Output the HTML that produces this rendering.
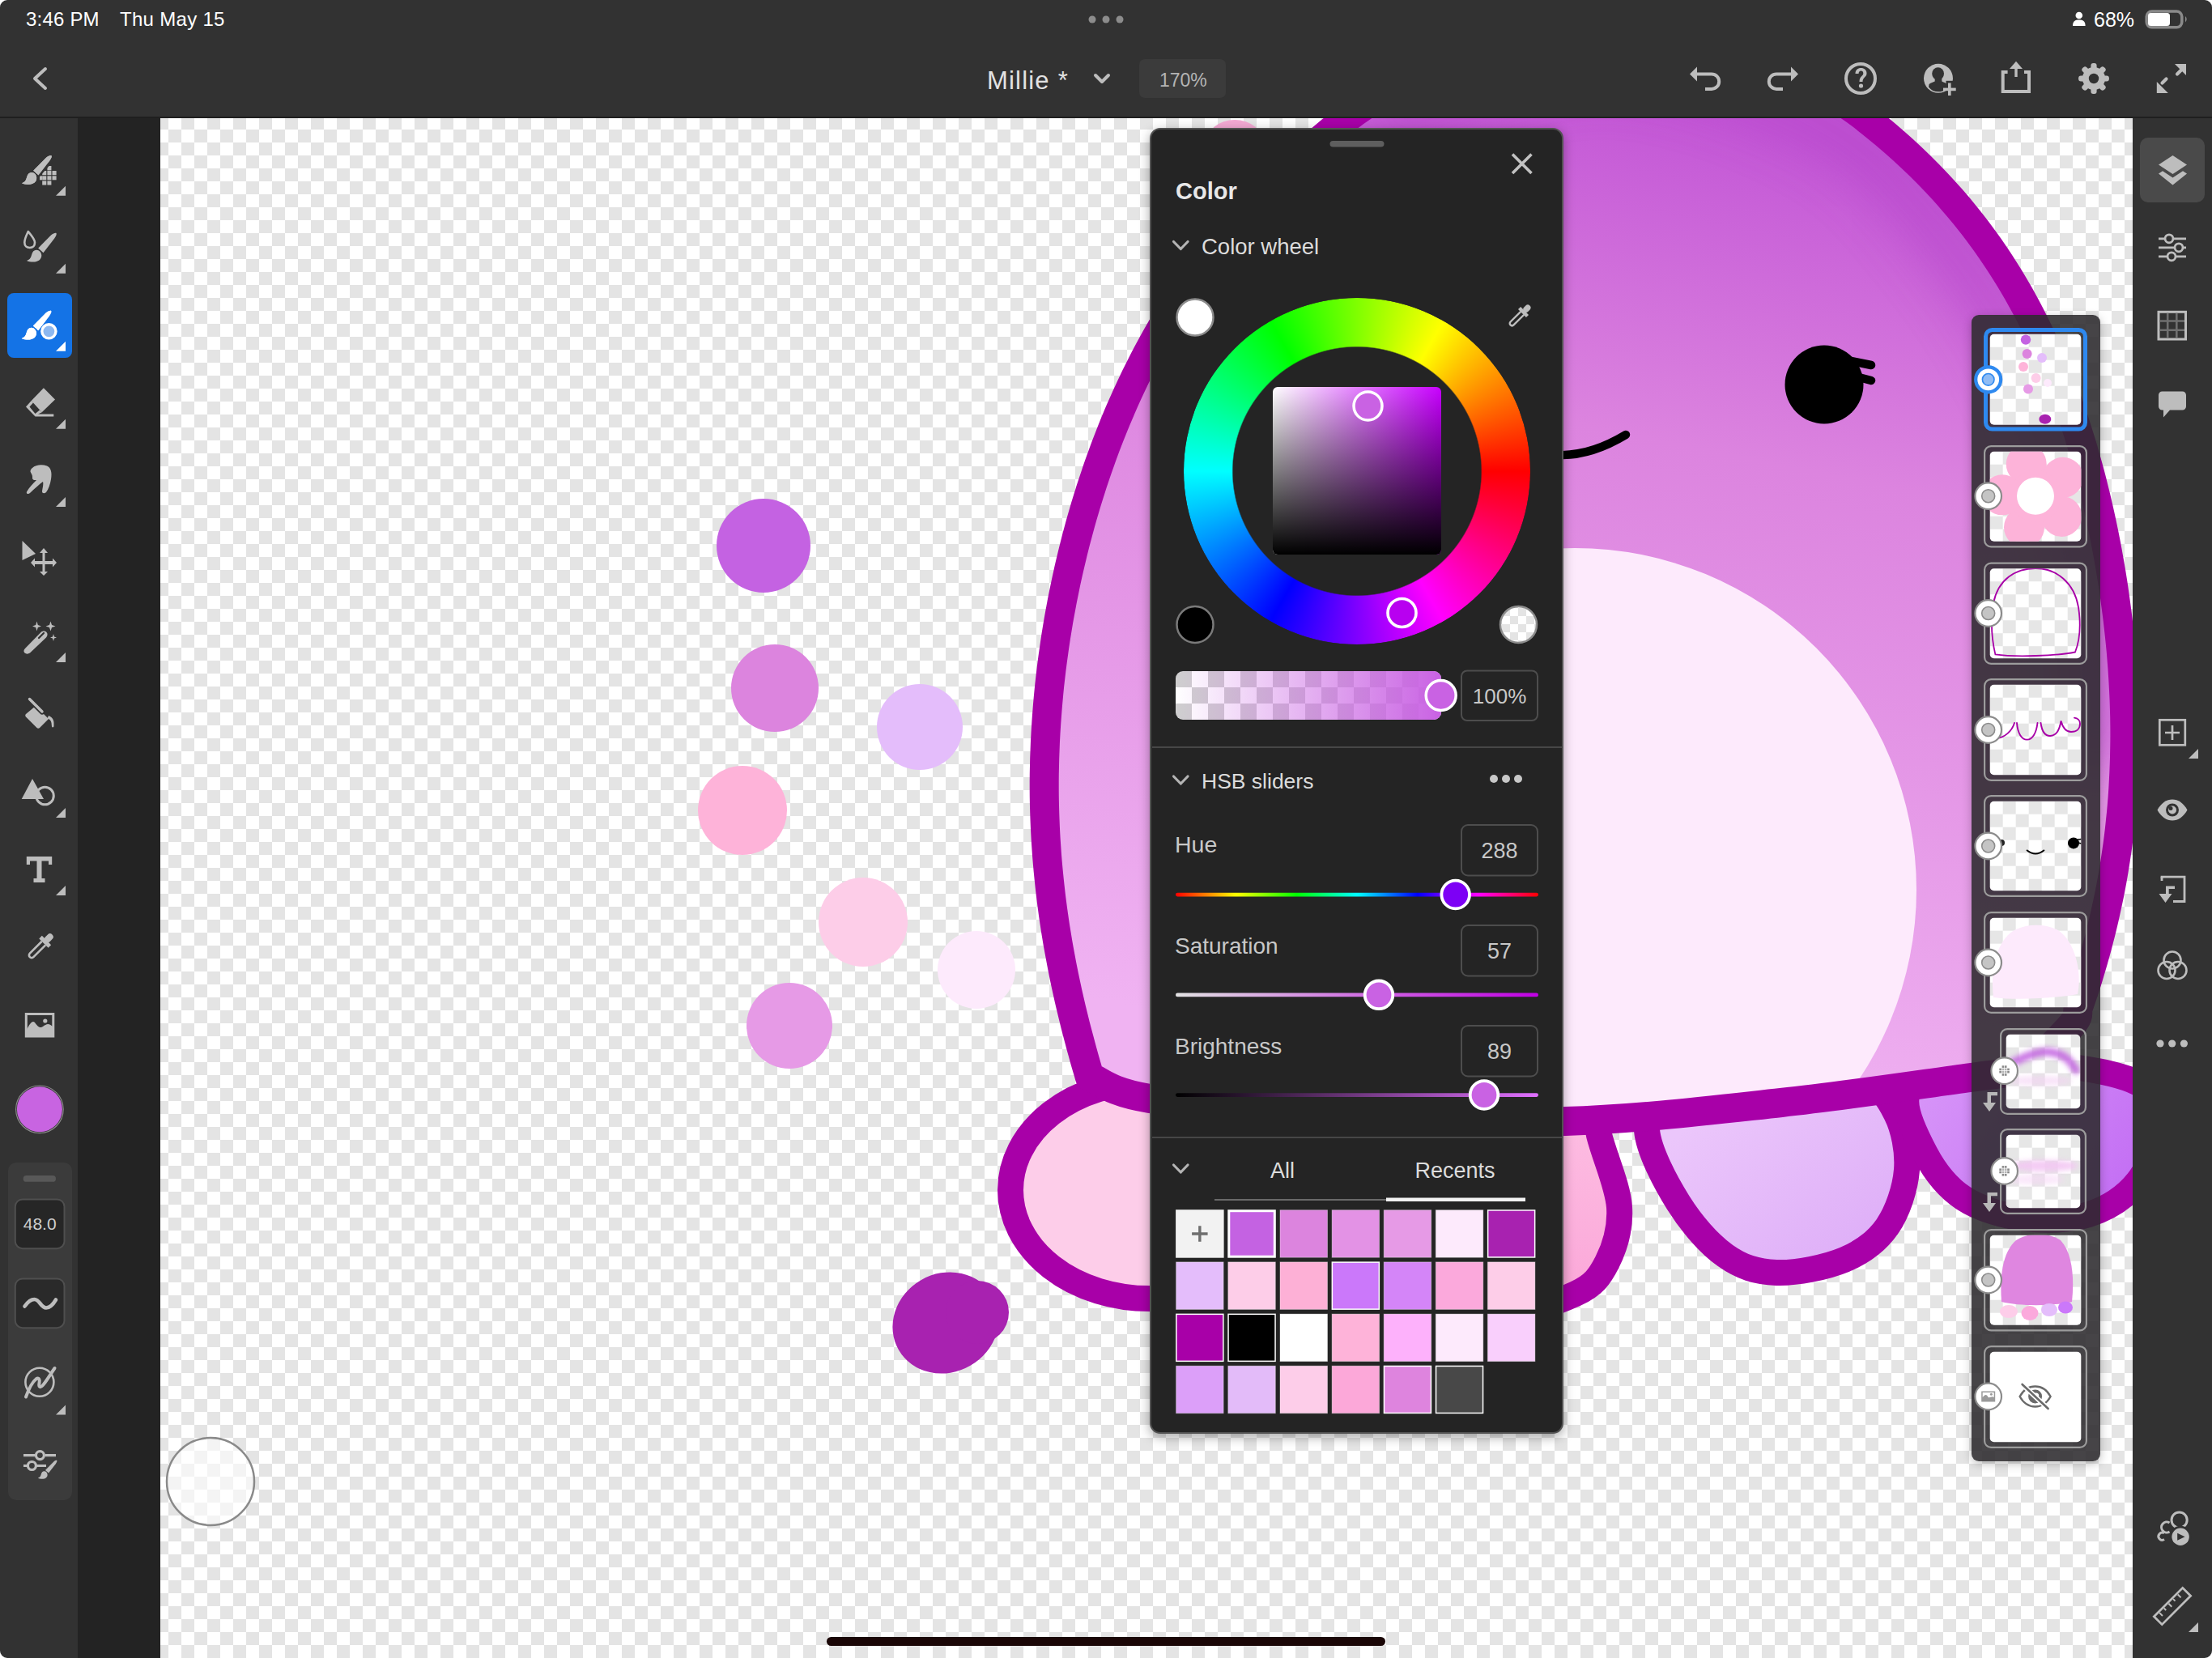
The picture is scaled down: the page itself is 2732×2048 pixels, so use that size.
<!DOCTYPE html>
<html><head><meta charset="utf-8">
<style>
*{margin:0;padding:0;box-sizing:border-box}
html,body{width:2732px;height:2048px;overflow:hidden;background:#323232;font-family:"Liberation Sans",sans-serif}
.abs{position:absolute}
#topbar{left:0;top:0;width:2732px;height:146px;background:#323232;border-bottom:2px solid #1f1f1f}
#lt{left:0;top:146px;width:96px;height:1902px;background:#323232}
#strip{left:96px;top:146px;width:102px;height:1902px;background:#232323}
#rt{left:2634px;top:146px;width:98px;height:1902px;background:#323232}
#canvas{left:198px;top:146px;width:2436px;height:1902px;
 background-color:#fff;
 background-image:conic-gradient(#e4e4e4 25%,#fff 0 50%,#e4e4e4 0 75%,#fff 0);
 background-size:32px 32px;background-position:-198px -146px}
svg{position:absolute;left:0;top:0}
.txt{position:absolute;white-space:nowrap;line-height:1}
</style></head>
<body>
<div id="topbar" class="abs"></div>
<div id="lt" class="abs"></div>
<div id="strip" class="abs"></div>
<div id="canvas" class="abs"></div>
<div id="rt" class="abs"></div>

<!-- ART -->
<svg width="2732" height="2048" viewBox="0 0 2732 2048">
<defs>
 <clipPath id="cv"><rect x="198" y="146" width="2436" height="1902"/></clipPath>
 <clipPath id="bodyclip"><path d="M2505.0,1322.0 C2514.1,1312.5 2549.4,1277.8 2559.7,1265.0 C2570.0,1252.2 2564.5,1251.7 2566.8,1245.0 C2569.1,1238.3 2571.3,1231.7 2573.5,1225.0 C2575.7,1218.3 2577.8,1211.7 2579.8,1205.0 C2581.8,1198.3 2583.8,1191.7 2585.7,1185.0 C2587.6,1178.3 2589.5,1171.7 2591.2,1165.0 C2593.0,1158.3 2594.7,1151.7 2596.3,1145.0 C2597.9,1138.3 2599.5,1131.7 2600.9,1125.0 C2602.4,1118.3 2603.8,1111.7 2605.2,1105.0 C2606.5,1098.3 2607.8,1091.7 2609.0,1085.0 C2610.2,1078.3 2611.3,1071.7 2612.3,1065.0 C2613.4,1058.3 2614.3,1051.7 2615.3,1045.0 C2616.2,1038.3 2617.0,1031.7 2617.8,1025.0 C2618.5,1018.3 2619.2,1011.7 2619.9,1005.0 C2620.5,998.3 2621.1,991.7 2621.6,985.0 C2622.1,978.3 2622.5,971.7 2622.8,965.0 C2623.2,958.3 2623.5,951.7 2623.7,945.0 C2624.0,938.3 2624.1,931.7 2624.2,925.0 C2624.4,918.3 2624.4,911.7 2624.4,905.0 C2624.4,898.3 2624.3,891.7 2624.2,885.0 C2624.0,878.3 2623.8,871.7 2623.6,865.0 C2623.3,858.3 2623.0,851.7 2622.6,845.0 C2622.3,838.3 2621.8,831.7 2621.4,825.0 C2620.9,818.3 2620.3,811.7 2619.8,805.0 C2619.2,798.3 2618.5,791.7 2617.8,785.0 C2617.1,778.3 2616.4,771.7 2615.6,765.0 C2614.8,758.3 2613.9,751.7 2613.0,745.0 C2612.1,738.3 2611.2,731.7 2610.2,725.0 C2609.2,718.3 2608.1,711.7 2607.0,705.0 C2605.9,698.3 2604.7,691.7 2603.5,685.0 C2602.3,678.3 2601.0,671.7 2599.7,665.0 C2598.4,658.3 2597.0,651.7 2595.6,645.0 C2594.1,638.3 2592.7,631.7 2591.1,625.0 C2589.6,618.3 2588.0,611.7 2586.3,605.0 C2584.7,598.3 2583.0,591.7 2581.2,585.0 C2579.4,578.3 2577.6,571.7 2575.7,565.0 C2573.8,558.3 2571.9,551.7 2569.8,545.0 C2567.8,538.3 2565.7,531.7 2563.5,525.0 C2561.4,518.3 2559.1,511.7 2556.8,505.0 C2554.5,498.3 2552.1,491.7 2549.6,485.0 C2547.1,478.3 2544.6,471.7 2541.9,465.0 C2539.3,458.3 2536.5,451.7 2533.7,445.0 C2530.8,438.3 2527.9,431.7 2524.8,425.0 C2521.8,418.3 2518.7,411.7 2515.4,405.0 C2512.1,398.3 2508.8,391.7 2505.3,385.0 C2501.7,378.3 2498.1,371.7 2494.4,365.0 C2490.6,358.3 2486.7,351.7 2482.7,345.0 C2478.6,338.3 2474.4,331.7 2470.1,325.0 C2465.7,318.3 2461.2,311.7 2456.6,305.0 C2451.9,298.3 2447.0,291.7 2442.0,285.0 C2437.0,278.3 2431.7,271.7 2426.3,265.0 C2420.9,258.3 2415.3,251.7 2409.4,245.0 C2403.6,238.3 2397.5,231.7 2391.2,225.0 C2384.9,218.3 2378.4,211.7 2371.6,205.0 C2364.7,198.3 2357.7,191.7 2350.4,185.0 C2343.0,178.3 2335.2,171.5 2327.5,165.0 C2319.8,158.5 2308.1,149.2 2304.2,146.0 C2145.0,21.0 1823.8,21.0 1663.6,146.0 C1659.4,149.3 1646.7,159.3 1638.7,166.0 C1630.7,172.7 1622.9,179.3 1615.3,186.0 C1607.8,192.7 1600.5,199.3 1593.4,206.0 C1586.3,212.7 1579.4,219.3 1572.7,226.0 C1566.1,232.7 1559.6,239.3 1553.3,246.0 C1547.0,252.7 1541.0,259.3 1535.1,266.0 C1529.2,272.7 1523.5,279.3 1517.9,286.0 C1512.4,292.7 1507.0,299.3 1501.8,306.0 C1496.5,312.7 1491.5,319.3 1486.6,326.0 C1481.6,332.7 1476.9,339.3 1472.2,346.0 C1467.6,352.7 1463.1,359.3 1458.8,366.0 C1454.4,372.7 1450.2,379.3 1446.1,386.0 C1442.0,392.7 1438.0,399.3 1434.1,406.0 C1430.3,412.7 1426.5,419.3 1422.9,426.0 C1419.2,432.7 1415.7,439.3 1412.2,446.0 C1408.8,452.7 1405.5,459.3 1402.2,466.0 C1399.0,472.7 1395.9,479.3 1392.8,486.0 C1389.7,492.7 1386.8,499.3 1383.9,506.0 C1381.0,512.7 1378.2,519.3 1375.5,526.0 C1372.8,532.7 1370.2,539.3 1367.6,546.0 C1365.0,552.7 1362.6,559.3 1360.2,566.0 C1357.8,572.7 1355.4,579.3 1353.2,586.0 C1350.9,592.7 1348.7,599.3 1346.6,606.0 C1344.5,612.7 1342.4,619.3 1340.4,626.0 C1338.4,632.7 1336.5,639.3 1334.6,646.0 C1332.8,652.7 1331.0,659.3 1329.2,666.0 C1327.5,672.7 1325.8,679.3 1324.2,686.0 C1322.6,692.7 1321.0,699.3 1319.5,706.0 C1318.0,712.7 1316.5,719.3 1315.2,726.0 C1313.8,732.7 1312.4,739.3 1311.2,746.0 C1309.9,752.7 1308.7,759.3 1307.5,766.0 C1306.4,772.7 1305.3,779.3 1304.2,786.0 C1303.2,792.7 1302.2,799.3 1301.3,806.0 C1300.3,812.7 1299.5,819.3 1298.6,826.0 C1297.8,832.7 1297.1,839.3 1296.3,846.0 C1295.6,852.7 1295.0,859.3 1294.4,866.0 C1293.8,872.7 1293.3,879.3 1292.8,886.0 C1292.3,892.7 1291.9,899.3 1291.5,906.0 C1291.1,912.7 1290.8,919.3 1290.6,926.0 C1290.3,932.7 1290.1,939.3 1290.0,946.0 C1289.8,952.7 1289.7,959.3 1289.7,966.0 C1289.7,972.7 1289.7,979.3 1289.8,986.0 C1289.9,992.7 1290.1,999.3 1290.3,1006.0 C1290.5,1012.7 1290.8,1019.3 1291.1,1026.0 C1291.4,1032.7 1291.8,1039.3 1292.3,1046.0 C1292.7,1052.7 1293.2,1059.3 1293.8,1066.0 C1294.4,1072.7 1295.0,1079.3 1295.7,1086.0 C1296.4,1092.7 1297.1,1099.3 1297.9,1106.0 C1298.7,1112.7 1299.6,1119.3 1300.5,1126.0 C1301.4,1132.7 1302.4,1139.3 1303.4,1146.0 C1304.5,1152.7 1305.6,1159.3 1306.7,1166.0 C1307.9,1172.7 1309.1,1179.3 1310.4,1186.0 C1311.6,1192.7 1313.0,1199.3 1314.3,1206.0 C1315.7,1212.7 1317.1,1219.3 1318.6,1226.0 C1320.1,1232.7 1321.6,1239.3 1323.2,1246.0 C1324.8,1252.7 1326.5,1259.3 1328.1,1266.0 C1329.8,1272.7 1331.6,1279.3 1333.4,1286.0 C1335.1,1292.7 1337.0,1299.3 1338.8,1306.0 C1340.7,1312.7 1343.4,1322.0 1344.6,1326.0 C1345.7,1330.0 1345.5,1329.3 1345.7,1330.0 L1346.0,1330.0 C1358.3,1334.5 1369.3,1349.0 1420.0,1357.0 C1470.7,1365.0 1564.5,1373.3 1650.0,1378.0 C1735.5,1382.7 1841.3,1387.7 1933.0,1385.0 C2024.7,1382.3 2116.5,1371.0 2200.0,1362.0 C2283.5,1353.0 2383.2,1337.7 2434.0,1331.0 C2484.8,1324.3 2493.2,1323.5 2505.0,1322.0Z"/></clipPath>
 <linearGradient id="bodyg" gradientUnits="userSpaceOnUse" x1="2120" y1="150" x2="1880" y2="1340">
  <stop offset="0" stop-color="#c357d6"/>
  <stop offset="0.33" stop-color="#dc84df"/>
  <stop offset="0.6" stop-color="#e496e6"/>
  <stop offset="1" stop-color="#f0b3f2"/>
 </linearGradient>
 <filter id="blur40" x="-30%" y="-30%" width="160%" height="160%"><feGaussianBlur stdDeviation="30"/></filter>
 <linearGradient id="f4g" gradientUnits="userSpaceOnUse" x1="2380" y1="1350" x2="2600" y2="1500">
  <stop offset="0" stop-color="#d693f8"/><stop offset="1" stop-color="#c470f4"/>
 </linearGradient>
 <linearGradient id="f3g" gradientUnits="userSpaceOnUse" x1="2100" y1="1380" x2="2250" y2="1570">
  <stop offset="0" stop-color="#ebc6fb"/><stop offset="1" stop-color="#dfb0f8"/>
 </linearGradient>
 <linearGradient id="f2g" gradientUnits="userSpaceOnUse" x1="1950" y1="1380" x2="1950" y2="1620">
  <stop offset="0" stop-color="#fdbde2"/><stop offset="1" stop-color="#fba6d8"/>
 </linearGradient>
</defs>
<g clip-path="url(#cv)">
 <g stroke="#a800a8" stroke-width="32" stroke-linejoin="round">
  <path d="M1248,1470 A172,134 0 1 0 1592,1470 A172,134 0 1 0 1248,1470 Z" fill="#fdcde9"/>
  <path d="M1700.0,1330.0 C1655.0,1350.0 1683.3,1410.0 1690.0,1450.0 C1696.7,1490.0 1713.3,1541.7 1740.0,1570.0 C1766.7,1598.3 1815.7,1615.3 1850.0,1620.0 C1884.3,1624.7 1923.5,1608.2 1946.0,1598.0 C1968.5,1587.8 1976.0,1576.8 1985.0,1559.0 C1994.0,1541.2 2001.7,1517.2 2000.0,1491.0 C1998.3,1464.8 1981.7,1428.8 1975.0,1402.0 C1968.3,1375.2 2005.8,1342.0 1960.0,1330.0 C1914.2,1318.0 1745.0,1310.0 1700.0,1330.0Z" fill="url(#f2g)"/>
  <path d="M2034.0,1396.0 C2036.2,1421.2 2056.8,1460.2 2073.0,1486.0 C2089.2,1511.8 2110.8,1536.7 2131.0,1551.0 C2151.2,1565.3 2169.5,1571.2 2194.0,1572.0 C2218.5,1572.8 2255.2,1565.5 2278.0,1556.0 C2300.8,1546.5 2318.2,1533.5 2331.0,1515.0 C2343.8,1496.5 2353.2,1468.2 2355.0,1445.0 C2356.8,1421.8 2351.2,1394.3 2342.0,1376.0 C2332.8,1357.7 2325.3,1343.5 2300.0,1335.0 C2274.7,1326.5 2230.0,1325.0 2190.0,1325.0 C2150.0,1325.0 2086.0,1323.2 2060.0,1335.0 C2034.0,1346.8 2031.8,1370.8 2034.0,1396.0Z" fill="url(#f3g)"/>
  <path d="M2356.0,1350.0 C2349.0,1368.8 2366.5,1403.3 2378.0,1425.0 C2389.5,1446.7 2404.7,1466.7 2425.0,1480.0 C2445.3,1493.3 2474.2,1501.7 2500.0,1505.0 C2525.8,1508.3 2556.7,1507.5 2580.0,1500.0 C2603.3,1492.5 2625.3,1478.3 2640.0,1460.0 C2654.7,1441.7 2666.7,1409.7 2668.0,1390.0 C2669.3,1370.3 2666.0,1354.0 2648.0,1342.0 C2630.0,1330.0 2598.0,1323.0 2560.0,1318.0 C2522.0,1313.0 2454.0,1306.7 2420.0,1312.0 C2386.0,1317.3 2363.0,1331.2 2356.0,1350.0Z" fill="url(#f4g)"/>
 </g>
 <path d="M2505.0,1322.0 C2514.1,1312.5 2549.4,1277.8 2559.7,1265.0 C2570.0,1252.2 2564.5,1251.7 2566.8,1245.0 C2569.1,1238.3 2571.3,1231.7 2573.5,1225.0 C2575.7,1218.3 2577.8,1211.7 2579.8,1205.0 C2581.8,1198.3 2583.8,1191.7 2585.7,1185.0 C2587.6,1178.3 2589.5,1171.7 2591.2,1165.0 C2593.0,1158.3 2594.7,1151.7 2596.3,1145.0 C2597.9,1138.3 2599.5,1131.7 2600.9,1125.0 C2602.4,1118.3 2603.8,1111.7 2605.2,1105.0 C2606.5,1098.3 2607.8,1091.7 2609.0,1085.0 C2610.2,1078.3 2611.3,1071.7 2612.3,1065.0 C2613.4,1058.3 2614.3,1051.7 2615.3,1045.0 C2616.2,1038.3 2617.0,1031.7 2617.8,1025.0 C2618.5,1018.3 2619.2,1011.7 2619.9,1005.0 C2620.5,998.3 2621.1,991.7 2621.6,985.0 C2622.1,978.3 2622.5,971.7 2622.8,965.0 C2623.2,958.3 2623.5,951.7 2623.7,945.0 C2624.0,938.3 2624.1,931.7 2624.2,925.0 C2624.4,918.3 2624.4,911.7 2624.4,905.0 C2624.4,898.3 2624.3,891.7 2624.2,885.0 C2624.0,878.3 2623.8,871.7 2623.6,865.0 C2623.3,858.3 2623.0,851.7 2622.6,845.0 C2622.3,838.3 2621.8,831.7 2621.4,825.0 C2620.9,818.3 2620.3,811.7 2619.8,805.0 C2619.2,798.3 2618.5,791.7 2617.8,785.0 C2617.1,778.3 2616.4,771.7 2615.6,765.0 C2614.8,758.3 2613.9,751.7 2613.0,745.0 C2612.1,738.3 2611.2,731.7 2610.2,725.0 C2609.2,718.3 2608.1,711.7 2607.0,705.0 C2605.9,698.3 2604.7,691.7 2603.5,685.0 C2602.3,678.3 2601.0,671.7 2599.7,665.0 C2598.4,658.3 2597.0,651.7 2595.6,645.0 C2594.1,638.3 2592.7,631.7 2591.1,625.0 C2589.6,618.3 2588.0,611.7 2586.3,605.0 C2584.7,598.3 2583.0,591.7 2581.2,585.0 C2579.4,578.3 2577.6,571.7 2575.7,565.0 C2573.8,558.3 2571.9,551.7 2569.8,545.0 C2567.8,538.3 2565.7,531.7 2563.5,525.0 C2561.4,518.3 2559.1,511.7 2556.8,505.0 C2554.5,498.3 2552.1,491.7 2549.6,485.0 C2547.1,478.3 2544.6,471.7 2541.9,465.0 C2539.3,458.3 2536.5,451.7 2533.7,445.0 C2530.8,438.3 2527.9,431.7 2524.8,425.0 C2521.8,418.3 2518.7,411.7 2515.4,405.0 C2512.1,398.3 2508.8,391.7 2505.3,385.0 C2501.7,378.3 2498.1,371.7 2494.4,365.0 C2490.6,358.3 2486.7,351.7 2482.7,345.0 C2478.6,338.3 2474.4,331.7 2470.1,325.0 C2465.7,318.3 2461.2,311.7 2456.6,305.0 C2451.9,298.3 2447.0,291.7 2442.0,285.0 C2437.0,278.3 2431.7,271.7 2426.3,265.0 C2420.9,258.3 2415.3,251.7 2409.4,245.0 C2403.6,238.3 2397.5,231.7 2391.2,225.0 C2384.9,218.3 2378.4,211.7 2371.6,205.0 C2364.7,198.3 2357.7,191.7 2350.4,185.0 C2343.0,178.3 2335.2,171.5 2327.5,165.0 C2319.8,158.5 2308.1,149.2 2304.2,146.0 C2145.0,21.0 1823.8,21.0 1663.6,146.0 C1659.4,149.3 1646.7,159.3 1638.7,166.0 C1630.7,172.7 1622.9,179.3 1615.3,186.0 C1607.8,192.7 1600.5,199.3 1593.4,206.0 C1586.3,212.7 1579.4,219.3 1572.7,226.0 C1566.1,232.7 1559.6,239.3 1553.3,246.0 C1547.0,252.7 1541.0,259.3 1535.1,266.0 C1529.2,272.7 1523.5,279.3 1517.9,286.0 C1512.4,292.7 1507.0,299.3 1501.8,306.0 C1496.5,312.7 1491.5,319.3 1486.6,326.0 C1481.6,332.7 1476.9,339.3 1472.2,346.0 C1467.6,352.7 1463.1,359.3 1458.8,366.0 C1454.4,372.7 1450.2,379.3 1446.1,386.0 C1442.0,392.7 1438.0,399.3 1434.1,406.0 C1430.3,412.7 1426.5,419.3 1422.9,426.0 C1419.2,432.7 1415.7,439.3 1412.2,446.0 C1408.8,452.7 1405.5,459.3 1402.2,466.0 C1399.0,472.7 1395.9,479.3 1392.8,486.0 C1389.7,492.7 1386.8,499.3 1383.9,506.0 C1381.0,512.7 1378.2,519.3 1375.5,526.0 C1372.8,532.7 1370.2,539.3 1367.6,546.0 C1365.0,552.7 1362.6,559.3 1360.2,566.0 C1357.8,572.7 1355.4,579.3 1353.2,586.0 C1350.9,592.7 1348.7,599.3 1346.6,606.0 C1344.5,612.7 1342.4,619.3 1340.4,626.0 C1338.4,632.7 1336.5,639.3 1334.6,646.0 C1332.8,652.7 1331.0,659.3 1329.2,666.0 C1327.5,672.7 1325.8,679.3 1324.2,686.0 C1322.6,692.7 1321.0,699.3 1319.5,706.0 C1318.0,712.7 1316.5,719.3 1315.2,726.0 C1313.8,732.7 1312.4,739.3 1311.2,746.0 C1309.9,752.7 1308.7,759.3 1307.5,766.0 C1306.4,772.7 1305.3,779.3 1304.2,786.0 C1303.2,792.7 1302.2,799.3 1301.3,806.0 C1300.3,812.7 1299.5,819.3 1298.6,826.0 C1297.8,832.7 1297.1,839.3 1296.3,846.0 C1295.6,852.7 1295.0,859.3 1294.4,866.0 C1293.8,872.7 1293.3,879.3 1292.8,886.0 C1292.3,892.7 1291.9,899.3 1291.5,906.0 C1291.1,912.7 1290.8,919.3 1290.6,926.0 C1290.3,932.7 1290.1,939.3 1290.0,946.0 C1289.8,952.7 1289.7,959.3 1289.7,966.0 C1289.7,972.7 1289.7,979.3 1289.8,986.0 C1289.9,992.7 1290.1,999.3 1290.3,1006.0 C1290.5,1012.7 1290.8,1019.3 1291.1,1026.0 C1291.4,1032.7 1291.8,1039.3 1292.3,1046.0 C1292.7,1052.7 1293.2,1059.3 1293.8,1066.0 C1294.4,1072.7 1295.0,1079.3 1295.7,1086.0 C1296.4,1092.7 1297.1,1099.3 1297.9,1106.0 C1298.7,1112.7 1299.6,1119.3 1300.5,1126.0 C1301.4,1132.7 1302.4,1139.3 1303.4,1146.0 C1304.5,1152.7 1305.6,1159.3 1306.7,1166.0 C1307.9,1172.7 1309.1,1179.3 1310.4,1186.0 C1311.6,1192.7 1313.0,1199.3 1314.3,1206.0 C1315.7,1212.7 1317.1,1219.3 1318.6,1226.0 C1320.1,1232.7 1321.6,1239.3 1323.2,1246.0 C1324.8,1252.7 1326.5,1259.3 1328.1,1266.0 C1329.8,1272.7 1331.6,1279.3 1333.4,1286.0 C1335.1,1292.7 1337.0,1299.3 1338.8,1306.0 C1340.7,1312.7 1343.4,1322.0 1344.6,1326.0 C1345.7,1330.0 1345.5,1329.3 1345.7,1330.0 L1346.0,1330.0 C1358.3,1334.5 1369.3,1349.0 1420.0,1357.0 C1470.7,1365.0 1564.5,1373.3 1650.0,1378.0 C1735.5,1382.7 1841.3,1387.7 1933.0,1385.0 C2024.7,1382.3 2116.5,1371.0 2200.0,1362.0 C2283.5,1353.0 2383.2,1337.7 2434.0,1331.0 C2484.8,1324.3 2493.2,1323.5 2505.0,1322.0Z" fill="url(#bodyg)"/>
 <g clip-path="url(#bodyclip)">
  <path d="M1700.0,150.0 C1745.7,136.7 1882.3,70.0 1974.0,70.0 C2065.7,70.0 2179.0,113.3 2250.0,150.0 C2321.0,186.7 2355.0,235.0 2400.0,290.0 C2445.0,345.0 2490.0,411.7 2520.0,480.0 C2550.0,548.3 2568.3,621.7 2580.0,700.0 C2591.7,778.3 2588.3,908.3 2590.0,950.0" fill="none" stroke="#b443c9" stroke-width="70" filter="url(#blur40)" opacity="0.55"/>
  <circle cx="1945" cy="1099" r="422" fill="#fdeafc"/>
 </g>
 <path d="M2505.0,1322.0 C2514.1,1312.5 2549.4,1277.8 2559.7,1265.0 C2570.0,1252.2 2564.5,1251.7 2566.8,1245.0 C2569.1,1238.3 2571.3,1231.7 2573.5,1225.0 C2575.7,1218.3 2577.8,1211.7 2579.8,1205.0 C2581.8,1198.3 2583.8,1191.7 2585.7,1185.0 C2587.6,1178.3 2589.5,1171.7 2591.2,1165.0 C2593.0,1158.3 2594.7,1151.7 2596.3,1145.0 C2597.9,1138.3 2599.5,1131.7 2600.9,1125.0 C2602.4,1118.3 2603.8,1111.7 2605.2,1105.0 C2606.5,1098.3 2607.8,1091.7 2609.0,1085.0 C2610.2,1078.3 2611.3,1071.7 2612.3,1065.0 C2613.4,1058.3 2614.3,1051.7 2615.3,1045.0 C2616.2,1038.3 2617.0,1031.7 2617.8,1025.0 C2618.5,1018.3 2619.2,1011.7 2619.9,1005.0 C2620.5,998.3 2621.1,991.7 2621.6,985.0 C2622.1,978.3 2622.5,971.7 2622.8,965.0 C2623.2,958.3 2623.5,951.7 2623.7,945.0 C2624.0,938.3 2624.1,931.7 2624.2,925.0 C2624.4,918.3 2624.4,911.7 2624.4,905.0 C2624.4,898.3 2624.3,891.7 2624.2,885.0 C2624.0,878.3 2623.8,871.7 2623.6,865.0 C2623.3,858.3 2623.0,851.7 2622.6,845.0 C2622.3,838.3 2621.8,831.7 2621.4,825.0 C2620.9,818.3 2620.3,811.7 2619.8,805.0 C2619.2,798.3 2618.5,791.7 2617.8,785.0 C2617.1,778.3 2616.4,771.7 2615.6,765.0 C2614.8,758.3 2613.9,751.7 2613.0,745.0 C2612.1,738.3 2611.2,731.7 2610.2,725.0 C2609.2,718.3 2608.1,711.7 2607.0,705.0 C2605.9,698.3 2604.7,691.7 2603.5,685.0 C2602.3,678.3 2601.0,671.7 2599.7,665.0 C2598.4,658.3 2597.0,651.7 2595.6,645.0 C2594.1,638.3 2592.7,631.7 2591.1,625.0 C2589.6,618.3 2588.0,611.7 2586.3,605.0 C2584.7,598.3 2583.0,591.7 2581.2,585.0 C2579.4,578.3 2577.6,571.7 2575.7,565.0 C2573.8,558.3 2571.9,551.7 2569.8,545.0 C2567.8,538.3 2565.7,531.7 2563.5,525.0 C2561.4,518.3 2559.1,511.7 2556.8,505.0 C2554.5,498.3 2552.1,491.7 2549.6,485.0 C2547.1,478.3 2544.6,471.7 2541.9,465.0 C2539.3,458.3 2536.5,451.7 2533.7,445.0 C2530.8,438.3 2527.9,431.7 2524.8,425.0 C2521.8,418.3 2518.7,411.7 2515.4,405.0 C2512.1,398.3 2508.8,391.7 2505.3,385.0 C2501.7,378.3 2498.1,371.7 2494.4,365.0 C2490.6,358.3 2486.7,351.7 2482.7,345.0 C2478.6,338.3 2474.4,331.7 2470.1,325.0 C2465.7,318.3 2461.2,311.7 2456.6,305.0 C2451.9,298.3 2447.0,291.7 2442.0,285.0 C2437.0,278.3 2431.7,271.7 2426.3,265.0 C2420.9,258.3 2415.3,251.7 2409.4,245.0 C2403.6,238.3 2397.5,231.7 2391.2,225.0 C2384.9,218.3 2378.4,211.7 2371.6,205.0 C2364.7,198.3 2357.7,191.7 2350.4,185.0 C2343.0,178.3 2335.2,171.5 2327.5,165.0 C2319.8,158.5 2308.1,149.2 2304.2,146.0 C2145.0,21.0 1823.8,21.0 1663.6,146.0 C1659.4,149.3 1646.7,159.3 1638.7,166.0 C1630.7,172.7 1622.9,179.3 1615.3,186.0 C1607.8,192.7 1600.5,199.3 1593.4,206.0 C1586.3,212.7 1579.4,219.3 1572.7,226.0 C1566.1,232.7 1559.6,239.3 1553.3,246.0 C1547.0,252.7 1541.0,259.3 1535.1,266.0 C1529.2,272.7 1523.5,279.3 1517.9,286.0 C1512.4,292.7 1507.0,299.3 1501.8,306.0 C1496.5,312.7 1491.5,319.3 1486.6,326.0 C1481.6,332.7 1476.9,339.3 1472.2,346.0 C1467.6,352.7 1463.1,359.3 1458.8,366.0 C1454.4,372.7 1450.2,379.3 1446.1,386.0 C1442.0,392.7 1438.0,399.3 1434.1,406.0 C1430.3,412.7 1426.5,419.3 1422.9,426.0 C1419.2,432.7 1415.7,439.3 1412.2,446.0 C1408.8,452.7 1405.5,459.3 1402.2,466.0 C1399.0,472.7 1395.9,479.3 1392.8,486.0 C1389.7,492.7 1386.8,499.3 1383.9,506.0 C1381.0,512.7 1378.2,519.3 1375.5,526.0 C1372.8,532.7 1370.2,539.3 1367.6,546.0 C1365.0,552.7 1362.6,559.3 1360.2,566.0 C1357.8,572.7 1355.4,579.3 1353.2,586.0 C1350.9,592.7 1348.7,599.3 1346.6,606.0 C1344.5,612.7 1342.4,619.3 1340.4,626.0 C1338.4,632.7 1336.5,639.3 1334.6,646.0 C1332.8,652.7 1331.0,659.3 1329.2,666.0 C1327.5,672.7 1325.8,679.3 1324.2,686.0 C1322.6,692.7 1321.0,699.3 1319.5,706.0 C1318.0,712.7 1316.5,719.3 1315.2,726.0 C1313.8,732.7 1312.4,739.3 1311.2,746.0 C1309.9,752.7 1308.7,759.3 1307.5,766.0 C1306.4,772.7 1305.3,779.3 1304.2,786.0 C1303.2,792.7 1302.2,799.3 1301.3,806.0 C1300.3,812.7 1299.5,819.3 1298.6,826.0 C1297.8,832.7 1297.1,839.3 1296.3,846.0 C1295.6,852.7 1295.0,859.3 1294.4,866.0 C1293.8,872.7 1293.3,879.3 1292.8,886.0 C1292.3,892.7 1291.9,899.3 1291.5,906.0 C1291.1,912.7 1290.8,919.3 1290.6,926.0 C1290.3,932.7 1290.1,939.3 1290.0,946.0 C1289.8,952.7 1289.7,959.3 1289.7,966.0 C1289.7,972.7 1289.7,979.3 1289.8,986.0 C1289.9,992.7 1290.1,999.3 1290.3,1006.0 C1290.5,1012.7 1290.8,1019.3 1291.1,1026.0 C1291.4,1032.7 1291.8,1039.3 1292.3,1046.0 C1292.7,1052.7 1293.2,1059.3 1293.8,1066.0 C1294.4,1072.7 1295.0,1079.3 1295.7,1086.0 C1296.4,1092.7 1297.1,1099.3 1297.9,1106.0 C1298.7,1112.7 1299.6,1119.3 1300.5,1126.0 C1301.4,1132.7 1302.4,1139.3 1303.4,1146.0 C1304.5,1152.7 1305.6,1159.3 1306.7,1166.0 C1307.9,1172.7 1309.1,1179.3 1310.4,1186.0 C1311.6,1192.7 1313.0,1199.3 1314.3,1206.0 C1315.7,1212.7 1317.1,1219.3 1318.6,1226.0 C1320.1,1232.7 1321.6,1239.3 1323.2,1246.0 C1324.8,1252.7 1326.5,1259.3 1328.1,1266.0 C1329.8,1272.7 1331.6,1279.3 1333.4,1286.0 C1335.1,1292.7 1337.0,1299.3 1338.8,1306.0 C1340.7,1312.7 1343.4,1322.0 1344.6,1326.0 C1345.7,1330.0 1345.5,1329.3 1345.7,1330.0 L1346.0,1330.0 C1358.3,1334.5 1369.3,1349.0 1420.0,1357.0 C1470.7,1365.0 1564.5,1373.3 1650.0,1378.0 C1735.5,1382.7 1841.3,1387.7 1933.0,1385.0 C2024.7,1382.3 2116.5,1371.0 2200.0,1362.0 C2283.5,1353.0 2383.2,1337.7 2434.0,1331.0 C2484.8,1324.3 2493.2,1323.5 2505.0,1322.0Z" fill="none" stroke="#a800a8" stroke-width="36" stroke-linejoin="round"/>
 <!-- face -->
 <circle cx="2253" cy="475" r="48.5" fill="#000"/>
 <path d="M2286,446 L2311,451 M2288,464 L2311,470" stroke="#000" stroke-width="10.5" stroke-linecap="round"/>
 <path d="M1880,546 C1900,566 1950,572 2008,537" fill="none" stroke="#000" stroke-width="10.5" stroke-linecap="round"/>
 <!-- flower peek -->
 <ellipse cx="1525" cy="178" rx="36" ry="30" fill="#f3a9d3"/>
 <!-- dots -->
 <circle cx="943" cy="674" r="58" fill="#c462e2"/>
 <circle cx="957" cy="850" r="54" fill="#dc84de"/>
 <circle cx="1136" cy="898" r="53" fill="#e4bdfb"/>
 <circle cx="917" cy="1001" r="55" fill="#feb3d9"/>
 <circle cx="1066" cy="1139" r="55" fill="#fdcde8"/>
 <circle cx="1206" cy="1198" r="48" fill="#fdeafc"/>
 <circle cx="975" cy="1267" r="53" fill="#e69ae6"/>
 <ellipse cx="1168" cy="1634" rx="67" ry="61" transform="rotate(-30 1168 1634)" fill="#a822b0"/><circle cx="1207" cy="1621" r="39" fill="#a822b0"/>
 <!-- brush cursor -->
 <circle cx="260" cy="1830" r="54" fill="rgba(255,255,255,0.6)" stroke="#8a8a8a" stroke-width="2.5"/>
</g>
<rect x="1021" y="2022" width="690" height="11" rx="5.5" fill="#1a0606"/>
</svg>


<!-- UI -->
<!-- status bar -->
<div class="txt" style="left:32px;top:12px;font-size:24px;color:#fff;letter-spacing:0.2px">3:46 PM</div>
<div class="txt" style="left:148px;top:12px;font-size:24px;color:#fff;letter-spacing:0.3px">Thu May 15</div>
<svg width="2732" height="50" viewBox="0 0 2732 50" style="left:0;top:0">
 <circle cx="1349" cy="24" r="4.5" fill="#8c8c8c"/><circle cx="1366" cy="24" r="4.5" fill="#8c8c8c"/><circle cx="1383" cy="24" r="4.5" fill="#8c8c8c"/>
 <circle cx="2567.8" cy="19" r="4.3" fill="#fff"/>
 <path d="M2560,32 C2560,26 2563,24.5 2567.8,24.5 C2572.5,24.5 2575.6,26 2575.6,32 Z" fill="#fff"/>
 <rect x="2651.2" y="14" width="43.6" height="19.8" rx="6.5" fill="none" stroke="#8a8a8a" stroke-width="3.5"/>
 <rect x="2653" y="16" width="27" height="16" rx="3.5" fill="#fff"/>
 <path d="M2699,20 Q2702.5,23.7 2699,27.5 Z" fill="#8a8a8a"/>
</svg>
<div class="txt" style="left:2586px;top:11.5px;font-size:25px;color:#fff">68%</div>
<!-- nav bar -->
<svg width="2732" height="146" viewBox="0 0 2732 146" style="left:0;top:0">
 <g fill="none" stroke="#bdbdbd" stroke-width="4" stroke-linecap="round" stroke-linejoin="round">
  <path d="M56,85 L43,97 L56,109"/>
  <path d="M1353,93 L1361,101 L1369,93"/>
  <!-- undo -->
  <path d="M2094,91.5 H2114 A9.2,9.2 0 0 1 2114,109.9 H2106" stroke-linecap="butt"/>
  <path d="M2214,91.5 H2194 A9.2,9.2 0 0 0 2194,109.9 H2202" stroke-linecap="butt"/>
  <!-- help -->
  <circle cx="2298" cy="97" r="18"/>
 </g>
 <g fill="#bdbdbd">
  <path d="M2087,91.5 L2096,82.5 L2096,100.5 Z"/>
  <path d="M2221,91.5 L2212,82.5 L2212,100.5 Z"/>
  <path d="M2291.5,91 C2291.5,86.5 2294.5,84 2298.5,84 C2302.5,84 2305.5,86.5 2305.5,90.5 C2305.5,95.5 2300.5,95.5 2300.5,101 L2296.5,101 C2296.5,94 2301.3,94 2301.3,90.5 C2301.3,88.7 2300.2,87.6 2298.5,87.6 C2296.7,87.6 2295.6,88.8 2295.6,91 Z"/>
  <circle cx="2298.5" cy="106" r="2.6"/>
  <!-- invite -->
  <circle cx="2394" cy="96.8" r="18"/>
  <ellipse cx="2393.6" cy="91" rx="7.4" ry="7.8" fill="#323232"/>
  <path d="M2389.7,96 L2398.2,96 L2398.4,100.5 C2400,101.5 2402,102 2404.5,103.5 L2404.5,110 C2401,112.5 2397.5,113.3 2394,113.3 C2389,113.3 2385,111.5 2382,107.5 L2382.6,104 C2385,102.3 2387.5,101.3 2389.7,100.5 Z" fill="#323232"/>
  <rect x="2403.5" y="99.8" width="14" height="20" fill="#323232"/>
  <rect x="2400" y="108.6" width="15.7" height="3.6"/>
  <rect x="2406" y="102.5" width="3.6" height="15.5"/>
  <!-- share -->
  <path d="M2471.7,87 H2479.6 V91 H2475.7 V111 H2504 V91 H2500 V87 H2508 V115 H2471.7 Z"/>
  <path d="M2490,75.7 L2498,85 H2491.7 V95 H2488.3 V85 H2482 Z"/>
  <!-- fullscreen -->
  <path d="M2686,79 H2700 V93 Z"/>
  <path d="M2677.8,115 H2663.8 V101 Z"/>
 </g>
 <g stroke="#bdbdbd" stroke-width="4.2" stroke-linecap="round">
  <path d="M2689,91.5 L2694,86.5"/><path d="M2670.5,102.5 L2675.5,97.5"/>
 </g>
 <!-- gear -->
 <g transform="translate(2586,97)" fill="#bdbdbd">
  <path d="M-3.5,-18.8 H3.5 L4,-13 L8.5,-11 L13,-14.8 L18,-9.8 L14.3,-5.3 L16.2,-0.8 L0,0 Z" opacity="0"/>
  <g id="teeth">
   <rect x="-3.6" y="-18.9" width="7.2" height="9" rx="3"/>
   <rect x="-3.6" y="-18.9" width="7.2" height="9" rx="3" transform="rotate(45)"/>
   <rect x="-3.6" y="-18.9" width="7.2" height="9" rx="3" transform="rotate(90)"/>
   <rect x="-3.6" y="-18.9" width="7.2" height="9" rx="3" transform="rotate(135)"/>
   <rect x="-3.6" y="-18.9" width="7.2" height="9" rx="3" transform="rotate(180)"/>
   <rect x="-3.6" y="-18.9" width="7.2" height="9" rx="3" transform="rotate(225)"/>
   <rect x="-3.6" y="-18.9" width="7.2" height="9" rx="3" transform="rotate(270)"/>
   <rect x="-3.6" y="-18.9" width="7.2" height="9" rx="3" transform="rotate(315)"/>
  </g>
  <circle r="14" fill="#bdbdbd"/>
  <circle r="6.2" fill="#323232"/>
 </g>
</svg>
<div class="txt" style="left:1219px;top:84px;font-size:31px;letter-spacing:1.2px;color:#e2e2e2">Millie *</div>
<div class="abs" style="left:1407px;top:73px;width:107px;height:48px;border-radius:7px;background:#3b3b3b"></div>
<div class="txt" style="left:1432px;top:88px;font-size:23px;color:#b4b4b4">170%</div>
<!-- LT -->
<svg width="96" height="1902" viewBox="0 146 96 1902" style="left:0;top:146px">
 <!-- 1 pixel brush -->
 <g transform="translate(27,226.3)" fill="#bdbdbd"><path d="M14.2,-15.5 L30,-31.5 C33,-34 35.5,-34.8 36.5,-34 C37.3,-33 36.3,-30.5 34.2,-27.5 L20.5,-9.7 Z"/><path d="M0,0 C3,-1 5,-3 6,-7 C7,-11 9,-13.2 12,-13.2 C15.5,-13.2 18.3,-10 18.3,-6.5 C18.3,-1.5 14,1.6 8,1.6 C5,1.6 2,1 0,0 Z"/></g>
 <g fill="#bdbdbd">
  <rect x="58.4" y="205" width="5" height="5.4"/>
  <rect x="52.2" y="211" width="5.1" height="5.2"/><rect x="58.4" y="211" width="5" height="5.2"/><rect x="64.5" y="211" width="5.1" height="5.2"/>
  <rect x="52.2" y="217.3" width="5.1" height="5"/><rect x="58.4" y="217.3" width="5" height="5"/><rect x="64.5" y="217.3" width="5.1" height="5"/><rect x="49" y="217.3" width="3.2" height="5"/>
  <rect x="52.2" y="223.4" width="5.1" height="5.1"/><rect x="58.4" y="223.4" width="5" height="5.1"/>
 </g>
 <path d="M44,221 L67,195" stroke="#323232" stroke-width="3.5"/>
 <g transform="translate(27.0,226.3)" fill="#bdbdbd"><path d="M14.2,-15.5 L30,-31.5 C33,-34 35.5,-34.8 36.5,-34 C37.3,-33 36.3,-30.5 34.2,-27.5 L20.5,-9.7 Z"/><path d="M0,0 C3,-1 5,-3 6,-7 C7,-11 9,-13.2 12,-13.2 C15.5,-13.2 18.3,-10 18.3,-6.5 C18.3,-1.5 14,1.6 8,1.6 C5,1.6 2,1 0,0 Z"/></g>
 <path d="M69,241.8 H81 V229.8 Z" fill="#bdbdbd"/>
 <!-- 2 watercolor -->
 <g transform="translate(33,322)" fill="#bdbdbd"><path d="M14.2,-15.5 L30,-31.5 C33,-34 35.5,-34.8 36.5,-34 C37.3,-33 36.3,-30.5 34.2,-27.5 L20.5,-9.7 Z"/><path d="M0,0 C3,-1 5,-3 6,-7 C7,-11 9,-13.2 12,-13.2 C15.5,-13.2 18.3,-10 18.3,-6.5 C18.3,-1.5 14,1.6 8,1.6 C5,1.6 2,1 0,0 Z"/></g>
 <path d="M34.8,286 C32,292 30.3,295 30.3,299.5 C30.3,303.5 33,306 36.8,306 C40.6,306 43,303.5 43,299.5 C43,295.5 39,291 34.8,286 Z" fill="none" stroke="#bdbdbd" stroke-width="2.6" stroke-linejoin="round"/>
 <path d="M69,337.8 H81 V325.8 Z" fill="#bdbdbd"/>
 <!-- 3 selected vector brush -->
 <rect x="9" y="362" width="80" height="80" rx="8" fill="#1473e6"/>
 <g transform="translate(26.7,418)" fill="#fff"><path d="M14.2,-15.5 L30,-31.5 C33,-34 35.5,-34.8 36.5,-34 C37.3,-33 36.3,-30.5 34.2,-27.5 L20.5,-9.7 Z"/><path d="M0,0 C3,-1 5,-3 6,-7 C7,-11 9,-13.2 12,-13.2 C15.5,-13.2 18.3,-10 18.3,-6.5 C18.3,-1.5 14,1.6 8,1.6 C5,1.6 2,1 0,0 Z"/></g>
 <circle cx="60.4" cy="409.3" r="8.6" fill="#8db8f0" stroke="#fff" stroke-width="3.4"/>
 <path d="M41,410 L67,383" stroke="#1473e6" stroke-width="3"/>
 <g transform="translate(26.7,418)" fill="#fff"><path d="M14.2,-15.5 L30,-31.5 C33,-34 35.5,-34.8 36.5,-34 C37.3,-33 36.3,-30.5 34.2,-27.5 L20.5,-9.7 Z"/><path d="M0,0 C3,-1 5,-3 6,-7 C7,-11 9,-13.2 12,-13.2 C15.5,-13.2 18.3,-10 18.3,-6.5 C18.3,-1.5 14,1.6 8,1.6 C5,1.6 2,1 0,0 Z"/></g>
 <path d="M69,433.7 H81 V421.7 Z" fill="#fff"/>
 <!-- 4 eraser -->
 <g fill="#bdbdbd">
  <path d="M53.9,479.3 L68,493.4 L51.7,509.2 L38.7,495 Z"/>
  <path d="M38.7,495 L32,502.5 L43.5,514.6 L66.3,514.6 L66.3,511.4 L47,511.4 L51.7,509.2 L49,506.5 L43.5,511 L36.5,502.5 L41,497.5 Z"/>
 </g>
 <path d="M69,529.8 H81 V517.8 Z" fill="#bdbdbd"/>
 <!-- 5 smudge -->
 <path d="M40,578 C44,574 52,573.5 58,575.5 C63,577.5 64.5,584 63,592 C62,598 60,604 57,608 C55,610 52,609.5 52,607 C52.5,603 54,598 53,595 C49,598 43,603 37,609 C35,611 32,610 33,607.5 C36,602 41,597 45,593 C42,593.5 39.5,592.5 40,589.5 C40.5,587 38,584.5 37.5,582.5 C37.5,580.5 38.5,579 40,578 Z" fill="#bdbdbd"/>
 <path d="M69,626 H81 V614 Z" fill="#bdbdbd"/>
 <!-- 6 move -->
 <g fill="#bdbdbd">
  <path d="M27.5,668 L44,684 L27.5,692 Z"/>
  <path d="M54,677 L59,683 H55.5 V693 H65 V689.5 L70,695 L65,700.5 V697 H55.5 V706 H59 L54,711 L49,706 H52.5 V697 H43 V700.5 L38,695 L43,689.5 V693 H52.5 V683 H49 Z"/>
 </g>
 <!-- 7 magic wand -->
 <g fill="#bdbdbd">
  <path d="M31,801 L50.5,781 C52.5,779 56,779 57.5,781 C59,782.5 59,785.5 57,787.5 L37,806.5 C35,808 32,808 30.5,806.5 C29,805 29,803 31,801 Z"/>
  <path d="M45.5,767.5 L46.8,772 L51,773.5 L46.8,775 L45.5,779.5 L44.2,775 L40,773.5 L44.2,772 Z"/>
  <path d="M62.5,767.5 L64,772 L68.5,773.5 L64,775 L62.5,779.5 L61,775 L56.5,773.5 L61,772 Z"/>
  <path d="M66,783 L67,786.5 L70,787.5 L67,788.5 L66,792 L65,788.5 L62,787.5 L65,786.5 Z"/>
 </g>
 <path d="M48,788 L54,782" stroke="#323232" stroke-width="2.2" stroke-linecap="round"/>
 <path d="M69,818 H81 V806 Z" fill="#bdbdbd"/>
 <!-- 8 fill -->
 <g fill="#bdbdbd">
  <path d="M44,872 L60,888 L49,899 C48,900 46.5,900 45.5,899 L32,885.5 C31,884.5 31,883 32,882 Z"/>
  <path d="M60,884 C63,885 66.5,888 66.5,893 V897 C66.5,898.5 64.5,899 64,897.5 L63.5,893 C63,890 61.5,888.5 58.5,887.5 Z"/>
 </g>
 <path d="M36.5,863.5 L52,879" stroke="#323232" stroke-width="7" stroke-linecap="round"/>
 <path d="M36.5,863.5 L52,879" stroke="#bdbdbd" stroke-width="3.4" stroke-linecap="round"/>
 <!-- 9 shapes -->
 <path d="M40,962 L54,987 H26.7 Z" fill="#bdbdbd"/>
 <circle cx="55.5" cy="983" r="10.8" fill="none" stroke="#bdbdbd" stroke-width="3"/>
 <path d="M69,1010 H81 V998 Z" fill="#bdbdbd"/>
 <!-- 10 text -->
 <path d="M32.8,1058 H64.2 V1068 H60 V1063.5 H51.5 V1085 H55.5 V1090 H41.5 V1085 H45.5 V1063.5 H37 V1068 H32.8 Z" fill="#bdbdbd"/>
 <path d="M69,1106 H81 V1094 Z" fill="#bdbdbd"/>
 <!-- 11 eyedropper -->
 <g transform="translate(49,1170) rotate(45)">
  <rect x="-4" y="-22" width="8" height="12" rx="4" fill="#bdbdbd"/>
  <rect x="-8" y="-12" width="16" height="5" fill="#bdbdbd"/>
  <path d="M-3.2,-7 V14 A3.2,3.2 0 0 0 3.2,14 V-7" fill="none" stroke="#bdbdbd" stroke-width="2.6"/>
 </g>
 <!-- 12 image -->
 <rect x="32.3" y="1252.5" width="33.5" height="27.5" fill="none" stroke="#bdbdbd" stroke-width="3"/>
 <path d="M33,1272 C37,1264 40,1260 43,1263 C46,1267 49,1271 53,1268 C57,1265 60,1263 65,1268 V1279 H33 Z" fill="#bdbdbd"/>
 <circle cx="55.8" cy="1261" r="2.6" fill="#bdbdbd"/>
 <!-- 13 color -->
 <circle cx="48.9" cy="1370.3" r="29.3" fill="none" stroke="#8a8a8a" stroke-width="1.2"/>
 <circle cx="48.9" cy="1370.3" r="28" fill="#c864e1"/>
 <!-- group -->
 <rect x="10" y="1436" width="79" height="417" rx="10" fill="#3b3b3b"/>
 <rect x="28.7" y="1452" width="40.3" height="7.8" rx="3.9" fill="#585858"/>
 <rect x="18.8" y="1481.5" width="60.7" height="60.7" rx="9" fill="#262626" stroke="#4f4f4f" stroke-width="2"/>
 <rect x="18.8" y="1579.5" width="60.7" height="60.7" rx="9" fill="#2a2a2a" stroke="#4f4f4f" stroke-width="2"/>
 <path d="M30.5,1613.5 C34,1608.5 38,1605 42.5,1605 C49,1605 50.5,1615.5 57,1615.5 C62,1615.5 66,1610.5 69,1605.5" fill="none" stroke="#bdbdbd" stroke-width="4.6" stroke-linecap="round"/>
 <circle cx="48.9" cy="1707.3" r="17.5" fill="none" stroke="#bdbdbd" stroke-width="2.6"/>
 <path d="M32,1725.5 C35,1717 40,1707 44.5,1703.5 C48,1701 49.5,1704 48.5,1708.5 C47.5,1713 49.5,1715 53,1711 C57,1706.5 62,1698 67.5,1690" fill="none" stroke="#bdbdbd" stroke-width="4" stroke-linecap="round"/>
 <path d="M69,1747.4 H81 V1735.4 Z" fill="#bdbdbd"/>
 <g stroke="#bdbdbd" stroke-width="3.2" fill="none">
  <path d="M29,1797.6 H43 M55.8,1797.6 H69"/><circle cx="49.4" cy="1797.6" r="5"/>
  <path d="M29,1810.5 H34 M44.8,1810.5 H57"/><circle cx="39.4" cy="1810.5" r="5"/>
 </g>
 <g transform="translate(46.9,1825.8) scale(0.64)" fill="#bdbdbd"><path d="M14.2,-15.5 L30,-31.5 C33,-34 35.5,-34.8 36.5,-34 C37.3,-33 36.3,-30.5 34.2,-27.5 L20.5,-9.7 Z"/><path d="M0,0 C3,-1 5,-3 6,-7 C7,-11 9,-13.2 12,-13.2 C15.5,-13.2 18.3,-10 18.3,-6.5 C18.3,-1.5 14,1.6 8,1.6 C5,1.6 2,1 0,0 Z"/></g>
</svg>
<!-- /LT -->
<!-- CP -->
<div class="abs" style="left:1420px;top:158px;width:511px;height:1613px;background:#242424;border:2px solid #525252;border-radius:13px;box-shadow:0 4px 14px rgba(0,0,0,0.35)"></div>
<svg width="2732" height="2048" viewBox="0 0 2732 2048" style="left:0;top:0">
 <defs>
  <pattern id="chk20" x="1452" y="829" width="40" height="40" patternUnits="userSpaceOnUse">
   <rect width="40" height="40" fill="#fff"/><rect width="20" height="20" fill="#cfcfcf"/><rect x="20" y="20" width="20" height="20" fill="#cfcfcf"/>
  </pattern>
  <pattern id="chk10" x="1855" y="751" width="20" height="20" patternUnits="userSpaceOnUse">
   <rect width="20" height="20" fill="#fff"/><rect width="10" height="10" fill="#e4e4e4"/><rect x="10" y="10" width="10" height="10" fill="#e4e4e4"/>
  </pattern>
  <linearGradient id="opg" x1="0" y1="0" x2="1" y2="0">
   <stop offset="0" stop-color="#c962e3" stop-opacity="0"/><stop offset="1" stop-color="#c962e3" stop-opacity="1"/>
  </linearGradient>
  <linearGradient id="sbw" x1="0" y1="0" x2="1" y2="0">
   <stop offset="0" stop-color="#fff"/><stop offset="1" stop-color="#c800ff"/>
  </linearGradient>
  <linearGradient id="sbk" x1="0" y1="0" x2="0" y2="1">
   <stop offset="0" stop-color="#000" stop-opacity="0"/><stop offset="1" stop-color="#000" stop-opacity="1"/>
  </linearGradient>
  <linearGradient id="hueg" x1="0" y1="0" x2="1" y2="0">
   <stop offset="0" stop-color="#ff0000"/><stop offset="0.1667" stop-color="#ffff00"/><stop offset="0.3333" stop-color="#00ff00"/><stop offset="0.5" stop-color="#00ffff"/><stop offset="0.6667" stop-color="#0000ff"/><stop offset="0.8333" stop-color="#ff00ff"/><stop offset="1" stop-color="#ff0000"/>
  </linearGradient>
  <linearGradient id="satg" x1="0" y1="0" x2="1" y2="0">
   <stop offset="0" stop-color="#e3e3e3"/><stop offset="1" stop-color="#c000e3"/>
  </linearGradient>
  <linearGradient id="brig" x1="0" y1="0" x2="1" y2="0">
   <stop offset="0" stop-color="#000"/><stop offset="1" stop-color="#e070ff"/>
  </linearGradient>
 </defs>
 <rect x="1642.5" y="174" width="67" height="7.6" rx="3.8" fill="#5e5e5e"/>
 <path d="M1868,190.5 L1891.5,214 M1891.5,190.5 L1868,214" stroke="#c2c2c2" stroke-width="3.6"/>
 <g fill="none" stroke="#b4b4b4" stroke-width="3.2" stroke-linecap="round" stroke-linejoin="round">
  <path d="M1449.5,298.5 L1458.3,307.5 L1467,298.5"/>
  <path d="M1449.5,959 L1458.3,968 L1467,959"/>
  <path d="M1449.5,1439 L1458.3,1448 L1467,1439"/>
 </g>
 <!-- wheel swatches -->
 <circle cx="1476" cy="392" r="22.5" fill="#fff" stroke="#8c8c8c" stroke-width="2.5"/>
 <circle cx="1476" cy="771.5" r="22.5" fill="#000" stroke="#7a7a7a" stroke-width="2.5"/>
 <circle cx="1875.5" cy="771.5" r="22.5" fill="url(#chk10)" stroke="#8c8c8c" stroke-width="2.5"/>
 <!-- eyedropper -->
 <g transform="translate(1876,391) rotate(45)">
  <rect x="-3.6" y="-19" width="7.2" height="10" rx="3.6" fill="#bdbdbd"/>
  <rect x="-7" y="-10" width="14" height="4.4" fill="#bdbdbd"/>
  <path d="M-2.8,-6 V12 A2.8,2.8 0 0 0 2.8,12 V-6" fill="none" stroke="#bdbdbd" stroke-width="2.4"/>
 </g>
 <!-- SB square -->
 <rect x="1572" y="478" width="208" height="207" rx="6" fill="url(#sbw)"/>
 <rect x="1572" y="478" width="208" height="207" rx="6" fill="url(#sbk)"/>
 <circle cx="1689.5" cy="501.5" r="17.5" fill="#c962e3" stroke="#fff" stroke-width="3.5"/>
 <!-- opacity -->
 <rect x="1452" y="829" width="328" height="60" rx="9" fill="url(#chk20)"/>
 <rect x="1452" y="829" width="328" height="60" rx="9" fill="url(#opg)"/>
 <circle cx="1779.7" cy="859" r="18.5" fill="#c962e3" stroke="#fff" stroke-width="3.5"/>
 <rect x="1805" y="828.5" width="94" height="61.5" rx="7" fill="none" stroke="#4d4d4d" stroke-width="2"/>
 <!-- separators -->
 <rect x="1423" y="922" width="506" height="2" fill="#474747"/>
 <rect x="1423" y="1404" width="506" height="2" fill="#474747"/>
 <!-- more dots -->
 <circle cx="1845" cy="962" r="5" fill="#c8c8c8"/><circle cx="1860" cy="962" r="5" fill="#c8c8c8"/><circle cx="1875" cy="962" r="5" fill="#c8c8c8"/>
 <!-- value boxes -->
 <rect x="1805" y="1019" width="94" height="62.5" rx="8" fill="none" stroke="#4d4d4d" stroke-width="2"/>
 <rect x="1805" y="1143" width="94" height="62.5" rx="8" fill="none" stroke="#4d4d4d" stroke-width="2"/>
 <rect x="1805" y="1267" width="94" height="62.5" rx="8" fill="none" stroke="#4d4d4d" stroke-width="2"/>
 <!-- tracks -->
 <rect x="1452" y="1102.8" width="448" height="4.6" rx="2.3" fill="url(#hueg)"/>
 <rect x="1452" y="1226.6" width="448" height="4.6" rx="2.3" fill="url(#satg)"/>
 <rect x="1452" y="1350.3" width="448" height="4.6" rx="2.3" fill="url(#brig)"/>
 <circle cx="1797.7" cy="1105" r="17.3" fill="#7d00f5" stroke="#fff" stroke-width="3.8"/>
 <circle cx="1703" cy="1228.8" r="17.3" fill="#c962e3" stroke="#fff" stroke-width="3.8"/>
 <circle cx="1833" cy="1352.5" r="17.3" fill="#c962e3" stroke="#fff" stroke-width="3.8"/>
 <!-- tabs -->
 <rect x="1500" y="1481" width="212" height="2" fill="#6a6a6a"/>
 <rect x="1712" y="1479.5" width="172" height="4.5" fill="#f2f2f2"/>
 <rect x="1452.1" y="1494.2" width="59.5" height="59.5" fill="#f2f2f2"/><path d="M1481.85,1514.2 V1533.7 M1472.1,1523.95 H1491.6" stroke="#6e6e6e" stroke-width="3.4"/><rect x="1517.8" y="1495.7" width="56.5" height="56.5" fill="#c462e2" stroke="#fff" stroke-width="3"/><rect x="1581.0" y="1494.7" width="58.5" height="58.5" fill="#dc84de" stroke="rgba(255,255,255,0.35)" stroke-width="1"/><rect x="1645.1" y="1494.7" width="58.5" height="58.5" fill="#e392e5" stroke="rgba(255,255,255,0.35)" stroke-width="1"/><rect x="1709.2" y="1494.7" width="58.5" height="58.5" fill="#e69ae6" stroke="rgba(255,255,255,0.35)" stroke-width="1"/><rect x="1773.3" y="1494.7" width="58.5" height="58.5" fill="#fdeafc" stroke="rgba(255,255,255,0.35)" stroke-width="1"/><rect x="1837.65" y="1494.95" width="58" height="58" fill="#a822b0" stroke="#fff" stroke-width="1.5"/><rect x="1452.6" y="1558.9" width="58.5" height="58.5" fill="#e4bdfb" stroke="rgba(255,255,255,0.35)" stroke-width="1"/><rect x="1516.8" y="1558.9" width="58.5" height="58.5" fill="#fdcde8" stroke="rgba(255,255,255,0.35)" stroke-width="1"/><rect x="1581.0" y="1558.9" width="58.5" height="58.5" fill="#fdb0d6" stroke="rgba(255,255,255,0.35)" stroke-width="1"/><rect x="1645.35" y="1559.15" width="58" height="58" fill="#cb78fa" stroke="#fff" stroke-width="1.5"/><rect x="1709.2" y="1558.9" width="58.5" height="58.5" fill="#d485f8" stroke="rgba(255,255,255,0.35)" stroke-width="1"/><rect x="1773.3" y="1558.9" width="58.5" height="58.5" fill="#fba9dc" stroke="rgba(255,255,255,0.35)" stroke-width="1"/><rect x="1837.4" y="1558.9" width="58.5" height="58.5" fill="#fdcde8" stroke="rgba(255,255,255,0.35)" stroke-width="1"/><rect x="1452.85" y="1623.35" width="58" height="58" fill="#a800a8" stroke="#fff" stroke-width="1.5"/><rect x="1517.05" y="1623.35" width="58" height="58" fill="#000000" stroke="#fff" stroke-width="1.5"/><rect x="1581.0" y="1623.1" width="58.5" height="58.5" fill="#ffffff" stroke="rgba(255,255,255,0.35)" stroke-width="1"/><rect x="1645.1" y="1623.1" width="58.5" height="58.5" fill="#feb3d9" stroke="rgba(255,255,255,0.35)" stroke-width="1"/><rect x="1709.2" y="1623.1" width="58.5" height="58.5" fill="#fdb1fb" stroke="rgba(255,255,255,0.35)" stroke-width="1"/><rect x="1773.3" y="1623.1" width="58.5" height="58.5" fill="#fdeafc" stroke="rgba(255,255,255,0.35)" stroke-width="1"/><rect x="1837.4" y="1623.1" width="58.5" height="58.5" fill="#f9cffc" stroke="rgba(255,255,255,0.35)" stroke-width="1"/><rect x="1452.6" y="1687.2" width="58.5" height="58.5" fill="#dc9ff9" stroke="rgba(255,255,255,0.35)" stroke-width="1"/><rect x="1516.8" y="1687.2" width="58.5" height="58.5" fill="#e3bbf9" stroke="rgba(255,255,255,0.35)" stroke-width="1"/><rect x="1581.0" y="1687.2" width="58.5" height="58.5" fill="#fdcde9" stroke="rgba(255,255,255,0.35)" stroke-width="1"/><rect x="1645.1" y="1687.2" width="58.5" height="58.5" fill="#fca8d9" stroke="rgba(255,255,255,0.35)" stroke-width="1"/><rect x="1709.45" y="1687.45" width="58" height="58" fill="#de84de" stroke="#fff" stroke-width="1.5"/><rect x="1773.55" y="1687.45" width="58" height="58" fill="#484848" stroke="#fff" stroke-width="1.5"/>
</svg>
<div class="txt" style="left:1452px;top:222px;font-size:29px;font-weight:bold;color:#e8e8e8">Color</div>
<div class="txt" style="left:1484px;top:291px;font-size:27.5px;color:#dcdcdc">Color wheel</div>
<div class="txt" style="left:1484px;top:951.5px;font-size:26.5px;color:#dcdcdc">HSB sliders</div>
<div class="txt" style="left:1451px;top:1029px;font-size:28.5px;color:#c8c8c8">Hue</div>
<div class="txt" style="left:1451px;top:1154.5px;font-size:28px;color:#c8c8c8">Saturation</div>
<div class="txt" style="left:1451px;top:1278.5px;font-size:28px;color:#c8c8c8">Brightness</div>
<div class="txt" style="left:1805px;width:94px;text-align:center;top:1038px;font-size:27px;color:#c8c8c8">288</div>
<div class="txt" style="left:1805px;width:94px;text-align:center;top:1162px;font-size:27px;color:#c8c8c8">57</div>
<div class="txt" style="left:1805px;width:94px;text-align:center;top:1286px;font-size:27px;color:#c8c8c8">89</div>
<div class="txt" style="left:1805px;width:94px;text-align:center;top:847px;font-size:26px;color:#c8c8c8">100%</div>
<div class="txt" style="left:1534px;width:100px;text-align:center;top:1433px;font-size:27px;color:#dcdcdc">All</div>
<div class="txt" style="left:1722px;width:150px;text-align:center;top:1433px;font-size:27px;color:#dcdcdc">Recents</div>
<div class="abs" style="left:1462px;top:368px;width:428px;height:428px;border-radius:50%;background:conic-gradient(from 0deg,hsl(90,100%,50%),hsl(60,100%,50%) 30deg,hsl(30,100%,50%) 60deg,hsl(0,100%,50%) 90deg,hsl(330,100%,50%) 120deg,hsl(300,100%,50%) 150deg,hsl(270,100%,50%) 180deg,hsl(240,100%,50%) 210deg,hsl(210,100%,50%) 240deg,hsl(180,100%,50%) 270deg,hsl(150,100%,50%) 300deg,hsl(120,100%,50%) 330deg,hsl(90,100%,50%) 360deg);
 -webkit-mask:radial-gradient(circle,transparent 153px,#000 154.5px);mask:radial-gradient(circle,transparent 153px,#000 154.5px);box-shadow:0 0 0 2px #3c3c3c"></div>
<svg width="2732" height="2048" viewBox="0 0 2732 2048" style="left:0;top:0"><circle cx="1731.5" cy="757" r="17.5" fill="#b800f0" stroke="#fff" stroke-width="3.6"/></svg>
<!-- /CP -->
<!-- LP -->
<div class="abs" style="left:2434.5px;top:389px;width:159px;height:1416px;border-radius:9px;background:rgba(44,42,46,0.88);box-shadow:0 3px 12px rgba(0,0,0,0.25)"></div>
<svg width="2732" height="2048" viewBox="0 0 2732 2048" style="left:0;top:0">
 <rect x="2452.5" y="407.5" width="123" height="122.5" rx="8" fill="none" stroke="#2e89f0" stroke-width="5"/><pattern id="tp0" x="2457.7" y="412.7" width="32" height="32" patternUnits="userSpaceOnUse"><rect width="32" height="32" fill="#fff"/><rect x="16" width="16" height="16" fill="#e6e6e6"/><rect y="16" width="16" height="16" fill="#e6e6e6"/></pattern><clipPath id="tc0"><rect x="2457.7" y="412.7" width="112.6" height="112.1" rx="5"/></clipPath><rect x="2457.7" y="412.7" width="112.6" height="112.1" rx="5" fill="url(#tp0)"/><g clip-path="url(#tc0)"><circle cx="2502" cy="419.6" r="6.2" fill="#c462e2"/><circle cx="2503.6" cy="437" r="6" fill="#dc84de"/><circle cx="2522" cy="442" r="6" fill="#e4bdfb"/><circle cx="2499" cy="453" r="6" fill="#feb3d9"/><circle cx="2514.6" cy="467" r="6" fill="#fdcde8"/><circle cx="2529" cy="473" r="5" fill="#fdeafc"/><circle cx="2505" cy="480.4" r="6" fill="#e69ae6"/><ellipse cx="2525.8" cy="517.7" rx="7.5" ry="6" fill="#a822b0"/></g><rect x="2451.1" y="551.1" width="125.8" height="124.3" rx="8" fill="none" stroke="#9c9c9c" stroke-width="2.2"/><pattern id="tp1" x="2457.7" y="557.7" width="32" height="32" patternUnits="userSpaceOnUse"><rect width="32" height="32" fill="#fff"/><rect x="16" width="16" height="16" fill="#e6e6e6"/><rect y="16" width="16" height="16" fill="#e6e6e6"/></pattern><clipPath id="tc1"><rect x="2457.7" y="557.7" width="112.6" height="111.1" rx="5"/></clipPath><rect x="2457.7" y="557.7" width="112.6" height="111.1" rx="5" fill="url(#tp1)"/><g clip-path="url(#tc1)"><circle cx="2502.7" cy="573.3" r="25" fill="#fdb3d9"/><circle cx="2548.0" cy="589.8" r="25" fill="#fdb3d9"/><circle cx="2546.3" cy="637.9" r="25" fill="#fdb3d9"/><circle cx="2500.0" cy="651.2" r="25" fill="#fdb3d9"/><circle cx="2473.0" cy="611.3" r="25" fill="#fdb3d9"/><circle cx="2514" cy="612.7" r="32" fill="#fdb3d9"/><circle cx="2514" cy="612.7" r="23" fill="#fff"/></g><rect x="2451.1" y="695.6" width="125.8" height="124.3" rx="8" fill="none" stroke="#9c9c9c" stroke-width="2.2"/><pattern id="tp2" x="2457.7" y="702.2" width="32" height="32" patternUnits="userSpaceOnUse"><rect width="32" height="32" fill="#fff"/><rect x="16" width="16" height="16" fill="#e6e6e6"/><rect y="16" width="16" height="16" fill="#e6e6e6"/></pattern><clipPath id="tc2"><rect x="2457.7" y="702.2" width="112.6" height="111.1" rx="5"/></clipPath><rect x="2457.7" y="702.2" width="112.6" height="111.1" rx="5" fill="url(#tp2)"/><g clip-path="url(#tc2)"><path d="M2464.4,808.4 C2460,790 2458,770 2462,745 C2468,715 2490,702 2514,702 C2540,702 2562,720 2567,750 C2570,770 2569,790 2563,805.5 C2540,810 2490,812 2464.4,808.4 Z" fill="none" stroke="#a800a8" stroke-width="1.8"/></g><rect x="2451.1" y="839.1" width="125.8" height="124.8" rx="8" fill="none" stroke="#9c9c9c" stroke-width="2.2"/><pattern id="tp3" x="2457.7" y="845.7" width="32" height="32" patternUnits="userSpaceOnUse"><rect width="32" height="32" fill="#fff"/><rect x="16" width="16" height="16" fill="#e6e6e6"/><rect y="16" width="16" height="16" fill="#e6e6e6"/></pattern><clipPath id="tc3"><rect x="2457.7" y="845.7" width="112.6" height="111.6" rx="5"/></clipPath><rect x="2457.7" y="845.7" width="112.6" height="111.6" rx="5" fill="url(#tp3)"/><g clip-path="url(#tc3)"><path d="M2466,912 C2476,911 2485,903 2488,893 M2491,893 C2492,906 2497,913.6 2503.5,913.6 C2510,913.6 2515,906 2516.5,893 M2520.5,893 C2522,904 2526,909 2532,909 C2540,909 2544,900 2545.5,890.5 C2548,900 2552,904 2558,904 C2565,904 2569,900 2569,894 C2569,890 2566,887 2562,886.6" fill="none" stroke="#a800a8" stroke-width="1.9" stroke-linecap="round"/></g><rect x="2451.1" y="983.1" width="125.8" height="123.8" rx="8" fill="none" stroke="#9c9c9c" stroke-width="2.2"/><pattern id="tp4" x="2457.7" y="989.7" width="32" height="32" patternUnits="userSpaceOnUse"><rect width="32" height="32" fill="#fff"/><rect x="16" width="16" height="16" fill="#e6e6e6"/><rect y="16" width="16" height="16" fill="#e6e6e6"/></pattern><clipPath id="tc4"><rect x="2457.7" y="989.7" width="112.6" height="110.6" rx="5"/></clipPath><rect x="2457.7" y="989.7" width="112.6" height="110.6" rx="5" fill="url(#tp4)"/><g clip-path="url(#tc4)"><path d="M2503,1050 Q2514,1059 2525,1050" fill="none" stroke="#000" stroke-width="1.8"/><circle cx="2561" cy="1041.4" r="7" fill="#000"/><path d="M2566,1037 L2571,1036.5 M2566.5,1041 L2571,1042" stroke="#000" stroke-width="1.5"/><circle cx="2472" cy="1041" r="4" fill="#222"/></g><rect x="2451.1" y="1127.1" width="125.8" height="123.8" rx="8" fill="none" stroke="#9c9c9c" stroke-width="2.2"/><pattern id="tp5" x="2457.7" y="1133.7" width="32" height="32" patternUnits="userSpaceOnUse"><rect width="32" height="32" fill="#fff"/><rect x="16" width="16" height="16" fill="#e6e6e6"/><rect y="16" width="16" height="16" fill="#e6e6e6"/></pattern><clipPath id="tc5"><rect x="2457.7" y="1133.7" width="112.6" height="110.6" rx="5"/></clipPath><rect x="2457.7" y="1133.7" width="112.6" height="110.6" rx="5" fill="url(#tp5)"/><g clip-path="url(#tc5)"><path d="M2462,1232 C2458,1200 2465,1160 2490,1148 C2505,1141 2525,1141 2540,1148 C2562,1160 2572,1200 2566,1228 C2540,1233 2490,1236 2462,1232 Z" fill="#fdeafc"/></g><rect x="2471.1" y="1271.1" width="104.8" height="104.8" rx="8" fill="none" stroke="#9c9c9c" stroke-width="2.2"/><pattern id="tp6" x="2477.7" y="1277.7" width="32" height="32" patternUnits="userSpaceOnUse"><rect width="32" height="32" fill="#fff"/><rect x="16" width="16" height="16" fill="#e6e6e6"/><rect y="16" width="16" height="16" fill="#e6e6e6"/></pattern><clipPath id="tc6"><rect x="2477.7" y="1277.7" width="91.6" height="91.6" rx="5"/></clipPath><rect x="2477.7" y="1277.7" width="91.6" height="91.6" rx="5" fill="url(#tp6)"/><g clip-path="url(#tc6)"><defs><filter id="bl7" x="-20%" y="-50%" width="140%" height="200%"><feGaussianBlur stdDeviation="3"/></filter></defs><path d="M2482,1315 C2500,1305 2520,1297 2535,1300 C2552,1303 2558,1312 2564,1322" fill="none" stroke="#c15fe0" stroke-width="10" stroke-linecap="round" filter="url(#bl7)" opacity="0.85"/><ellipse cx="2520" cy="1335" rx="40" ry="6" fill="#f4d0f4" filter="url(#bl7)" opacity="0.6"/></g><rect x="2471.1" y="1395.1" width="104.8" height="103.8" rx="8" fill="none" stroke="#9c9c9c" stroke-width="2.2"/><pattern id="tp7" x="2477.7" y="1401.7" width="32" height="32" patternUnits="userSpaceOnUse"><rect width="32" height="32" fill="#fff"/><rect x="16" width="16" height="16" fill="#e6e6e6"/><rect y="16" width="16" height="16" fill="#e6e6e6"/></pattern><clipPath id="tc7"><rect x="2477.7" y="1401.7" width="91.6" height="90.6" rx="5"/></clipPath><rect x="2477.7" y="1401.7" width="91.6" height="90.6" rx="5" fill="url(#tp7)"/><g clip-path="url(#tc7)"><ellipse cx="2525" cy="1440" rx="42" ry="7" fill="#f3c6f3" filter="url(#bl7)" opacity="0.9"/><ellipse cx="2515" cy="1457" rx="35" ry="6" fill="#f7d6f7" filter="url(#bl7)" opacity="0.6"/></g><rect x="2451.1" y="1519.1" width="125.8" height="124.3" rx="8" fill="none" stroke="#9c9c9c" stroke-width="2.2"/><pattern id="tp8" x="2457.7" y="1525.7" width="32" height="32" patternUnits="userSpaceOnUse"><rect width="32" height="32" fill="#fff"/><rect x="16" width="16" height="16" fill="#e6e6e6"/><rect y="16" width="16" height="16" fill="#e6e6e6"/></pattern><clipPath id="tc8"><rect x="2457.7" y="1525.7" width="112.6" height="111.1" rx="5"/></clipPath><rect x="2457.7" y="1525.7" width="112.6" height="111.1" rx="5" fill="url(#tp8)"/><g clip-path="url(#tc8)"><path d="M2472,1608 C2470,1580 2472,1548 2490,1532 C2505,1522 2530,1522 2545,1532 C2560,1548 2562,1580 2559,1608 C2540,1613 2495,1614 2472,1608 Z" fill="#df86e0"/><ellipse cx="2481" cy="1620" rx="11" ry="8" fill="#fdcde9"/><ellipse cx="2507" cy="1622" rx="10.5" ry="9" fill="#fba9dc"/><ellipse cx="2531" cy="1618" rx="10" ry="8" fill="#e4bdfb"/><ellipse cx="2551" cy="1615" rx="9" ry="7.5" fill="#cb78fa"/></g><rect x="2451.1" y="1663.1" width="125.8" height="124.8" rx="8" fill="none" stroke="#9c9c9c" stroke-width="2.2"/><pattern id="tp9" x="2457.7" y="1669.7" width="32" height="32" patternUnits="userSpaceOnUse"><rect width="32" height="32" fill="#fff"/><rect x="16" width="16" height="16" fill="#e6e6e6"/><rect y="16" width="16" height="16" fill="#e6e6e6"/></pattern><clipPath id="tc9"><rect x="2457.7" y="1669.7" width="112.6" height="111.6" rx="5"/></clipPath><rect x="2457.7" y="1669.7" width="112.6" height="111.6" rx="5" fill="#fff"/><g clip-path="url(#tc9)"><g transform="translate(2513.6,1725)"><path d="M-19,0 C-14,-9 -7,-12.5 0,-12.5 C7,-12.5 14,-9 19,0 C14,9 7,12.5 0,12.5 C-7,12.5 -14,9 -19,0 Z" fill="none" stroke="#6a6a6a" stroke-width="2.4"/><circle r="8.5" fill="#6a6a6a"/><circle r="3.6" cx="1" cy="-1" fill="#fff"/><path d="M-16,-15 L16,15" stroke="#fff" stroke-width="6"/><path d="M-16,-15 L16,15" stroke="#6a6a6a" stroke-width="2.6" stroke-linecap="round"/></g></g>
 <circle cx="2455.7" cy="468.8" r="15.5" fill="#fff" stroke="#2e89f0" stroke-width="4.2"/><circle cx="2455.7" cy="468.8" r="7.3" fill="#90bcf4" stroke="#2e89f0" stroke-width="1.6"/><circle cx="2455.7" cy="612.7" r="16.3" fill="#fff" stroke="#8c8c8c" stroke-width="2.2"/><circle cx="2455.7" cy="612.7" r="8" fill="#c4c4c4" stroke="#8c8c8c" stroke-width="1.6"/><circle cx="2455.7" cy="757.5" r="16.3" fill="#fff" stroke="#8c8c8c" stroke-width="2.2"/><circle cx="2455.7" cy="757.5" r="8" fill="#c4c4c4" stroke="#8c8c8c" stroke-width="1.6"/><circle cx="2455.7" cy="901.5" r="16.3" fill="#fff" stroke="#8c8c8c" stroke-width="2.2"/><circle cx="2455.7" cy="901.5" r="8" fill="#c4c4c4" stroke="#8c8c8c" stroke-width="1.6"/><circle cx="2455.7" cy="1045" r="16.3" fill="#fff" stroke="#8c8c8c" stroke-width="2.2"/><circle cx="2455.7" cy="1045" r="8" fill="#c4c4c4" stroke="#8c8c8c" stroke-width="1.6"/><circle cx="2455.7" cy="1189" r="16.3" fill="#fff" stroke="#8c8c8c" stroke-width="2.2"/><circle cx="2455.7" cy="1189" r="8" fill="#c4c4c4" stroke="#8c8c8c" stroke-width="1.6"/><circle cx="2475.7" cy="1322.7" r="16.3" fill="#fff" stroke="#8c8c8c" stroke-width="2.2"/><rect x="2469.3" y="1319.6" width="2.6" height="2.6" fill="#8a8a8a"/><rect x="2469.3" y="1322.9" width="2.6" height="2.6" fill="#8a8a8a"/><rect x="2472.6" y="1316.3" width="2.6" height="2.6" fill="#8a8a8a"/><rect x="2472.6" y="1319.6" width="2.6" height="2.6" fill="#b4b4b4"/><rect x="2472.6" y="1322.9" width="2.6" height="2.6" fill="#b4b4b4"/><rect x="2472.6" y="1326.2" width="2.6" height="2.6" fill="#8a8a8a"/><rect x="2475.9" y="1316.3" width="2.6" height="2.6" fill="#8a8a8a"/><rect x="2475.9" y="1319.6" width="2.6" height="2.6" fill="#b4b4b4"/><rect x="2475.9" y="1322.9" width="2.6" height="2.6" fill="#b4b4b4"/><rect x="2475.9" y="1326.2" width="2.6" height="2.6" fill="#8a8a8a"/><rect x="2479.2" y="1319.6" width="2.6" height="2.6" fill="#8a8a8a"/><rect x="2479.2" y="1322.9" width="2.6" height="2.6" fill="#8a8a8a"/><circle cx="2475.7" cy="1446.5" r="16.3" fill="#fff" stroke="#8c8c8c" stroke-width="2.2"/><rect x="2469.3" y="1443.4" width="2.6" height="2.6" fill="#8a8a8a"/><rect x="2469.3" y="1446.7" width="2.6" height="2.6" fill="#8a8a8a"/><rect x="2472.6" y="1440.1" width="2.6" height="2.6" fill="#8a8a8a"/><rect x="2472.6" y="1443.4" width="2.6" height="2.6" fill="#b4b4b4"/><rect x="2472.6" y="1446.7" width="2.6" height="2.6" fill="#b4b4b4"/><rect x="2472.6" y="1450.0" width="2.6" height="2.6" fill="#8a8a8a"/><rect x="2475.9" y="1440.1" width="2.6" height="2.6" fill="#8a8a8a"/><rect x="2475.9" y="1443.4" width="2.6" height="2.6" fill="#b4b4b4"/><rect x="2475.9" y="1446.7" width="2.6" height="2.6" fill="#b4b4b4"/><rect x="2475.9" y="1450.0" width="2.6" height="2.6" fill="#8a8a8a"/><rect x="2479.2" y="1443.4" width="2.6" height="2.6" fill="#8a8a8a"/><rect x="2479.2" y="1446.7" width="2.6" height="2.6" fill="#8a8a8a"/><circle cx="2455.7" cy="1581" r="16.3" fill="#fff" stroke="#8c8c8c" stroke-width="2.2"/><circle cx="2455.7" cy="1581" r="8" fill="#c4c4c4" stroke="#8c8c8c" stroke-width="1.6"/><circle cx="2455.7" cy="1725" r="16.3" fill="#fff" stroke="#8c8c8c" stroke-width="2.2"/><rect x="2447.2" y="1718.5" width="17" height="13" fill="#9a9a9a"/><path d="M2448.7,1730 L2452.7,1725 L2456.7,1728 L2459.7,1726 L2462.7,1730 Z" fill="#fff" opacity="0.0"/><path d="M2448.7,1720 H2462.7 V1726 C2459.7,1724 2457.7,1727 2455.7,1726 C2453.7,1722 2451.7,1722 2448.7,1726 Z" fill="#fff"/><circle cx="2459.3999999999996" cy="1722.3" r="1.5" fill="#9a9a9a"/>
 <path d="M2467,1349 H2454.5 V1362 H2449 L2457,1373 L2465,1362 H2459 V1353.2 H2467 Z" fill="#b8b8b8"/><path d="M2467,1473 H2454.5 V1486 H2449 L2457,1497 L2465,1486 H2459 V1477.2 H2467 Z" fill="#b8b8b8"/>
</svg>
<!-- /LP -->
<!-- RT -->
<svg width="98" height="1902" viewBox="2634 146 98 1902" style="left:2634px;top:146px">
 <rect x="2643" y="170" width="80" height="80" rx="10" fill="#4a4a4a"/>
 <g fill="#bdbdbd">
  <path d="M2683.5,192 L2701,203.5 L2683.5,215 L2666,203.5 Z"/>
  <path d="M2671,211.2 L2683.5,219.5 L2696,211.2 L2701,214.5 L2683.5,228.5 L2666,214.5 Z"/>
 </g>
 <!-- sliders -->
 <g stroke="#bdbdbd" stroke-width="2.8" fill="none">
  <path d="M2666,294.8 H2674 M2684,294.8 H2700"/><circle cx="2679" cy="294.8" r="5"/>
  <path d="M2666,305.8 H2686 M2696,305.8 H2700"/><circle cx="2691" cy="305.8" r="5"/>
  <path d="M2666,316.8 H2677 M2687,316.8 H2700"/><circle cx="2682" cy="316.8" r="5"/>
 </g>
 <!-- grid -->
 <rect x="2666" y="385.3" width="33.5" height="33.7" fill="none" stroke="#bdbdbd" stroke-width="3"/>
 <g stroke="#6f6f6f" stroke-width="2.6">
  <path d="M2677.2,386.8 V417.5 M2688.3,386.8 V417.5 M2667.5,396.5 H2698 M2667.5,407.7 H2698"/>
 </g>
 <!-- comment -->
 <path d="M2670.5,483.5 H2695.5 C2698,483.5 2700,485.5 2700,488 V502 C2700,504.5 2698,506.5 2695.5,506.5 H2680 L2672,515.5 V506.5 H2670.5 C2668,506.5 2666,504.5 2666,502 V488 C2666,485.5 2668,483.5 2670.5,483.5 Z" fill="#bdbdbd"/>
 <!-- add layer -->
 <rect x="2667.3" y="889.3" width="31.5" height="31" fill="none" stroke="#bdbdbd" stroke-width="2.7"/>
 <path d="M2683,896 V914 M2674,905 H2692" stroke="#bdbdbd" stroke-width="2.7"/>
 <path d="M2703,937 H2715 V925 Z" fill="#bdbdbd"/>
 <!-- eye -->
 <path d="M2664.5,1000.5 C2669,992 2676,987.5 2683,987.5 C2690,987.5 2697,992 2701.5,1000.5 C2697,1009 2690,1013.5 2683,1013.5 C2676,1013.5 2669,1009 2664.5,1000.5 Z" fill="#bdbdbd"/>
 <circle cx="2683" cy="1000.5" r="8" fill="#323232"/>
 <circle cx="2683" cy="1000.5" r="5" fill="#bdbdbd"/>
 <circle cx="2681" cy="998.5" r="2.5" fill="#323232"/>
 <!-- clip -->
 <path d="M2670,1085 V1083.2 H2698 V1113.5 H2684" fill="none" stroke="#bdbdbd" stroke-width="2.8"/>
 <path d="M2670,1083.5 V1088" stroke="#bdbdbd" stroke-width="2.8"/>
 <path d="M2686,1094.5 H2675 V1104 H2666.5 L2674.5,1115 L2682.5,1104 H2678.7 V1098 H2686 Z" fill="#bdbdbd"/>
 <!-- blend -->
 <g fill="none" stroke="#bdbdbd" stroke-width="2.6">
  <circle cx="2683" cy="1186" r="10.5"/><circle cx="2676" cy="1198.5" r="10.5"/><circle cx="2690" cy="1198.5" r="10.5"/>
 </g>
 <circle cx="2668" cy="1289" r="4.6" fill="#bdbdbd"/><circle cx="2682.7" cy="1289" r="4.6" fill="#bdbdbd"/><circle cx="2697.4" cy="1289" r="4.6" fill="#bdbdbd"/>
 <!-- timelapse -->
 <g fill="none" stroke="#bdbdbd" stroke-width="3">
  <circle cx="2691.6" cy="1877.6" r="9.6"/>
  <path d="M2679.5,1881 A6.5,6.5 0 1 0 2679.5,1892"/>
  <path d="M2673,1893.8 A4.6,4.6 0 1 0 2673,1901.6"/>
 </g>
 <circle cx="2693.1" cy="1898.3" r="13.5" fill="#323232"/>
 <circle cx="2693.1" cy="1898.3" r="10.7" fill="#bdbdbd"/>
 <path d="M2689.2,1893.8 L2698.6,1898.3 L2689.2,1902.8 Z" fill="#323232"/>
 <!-- ruler -->
 <g transform="translate(2683,1984) rotate(-45)">
  <rect x="-25" y="-7" width="50" height="14" fill="none" stroke="#bdbdbd" stroke-width="2.8"/>
  <path d="M-17,-5.5 V0 M-9,-5.5 V-2 M-1,-5.5 V0 M7,-5.5 V-2 M15,-5.5 V0" stroke="#bdbdbd" stroke-width="2"/>
 </g>
 <path d="M2703,2016 H2715 V2004 Z" fill="#bdbdbd"/>
</svg>
<!-- /RT -->
<div class="txt" style="left:18.8px;width:60.7px;text-align:center;top:1501px;font-size:21px;color:#cfcfcf">48.0</div>
<svg width="2732" height="2048" viewBox="0 0 2732 2048" style="left:0;top:0">
 <path d="M0,0 H9 A9,9 0 0 0 0,9 Z M2732,0 V9 A9,9 0 0 0 2723,0 Z M0,2048 V2039 A9,9 0 0 0 9,2048 Z M2732,2048 H2723 A9,9 0 0 0 2732,2039 Z" fill="#fff"/>
</svg>
<!-- /UI -->
</body></html>
